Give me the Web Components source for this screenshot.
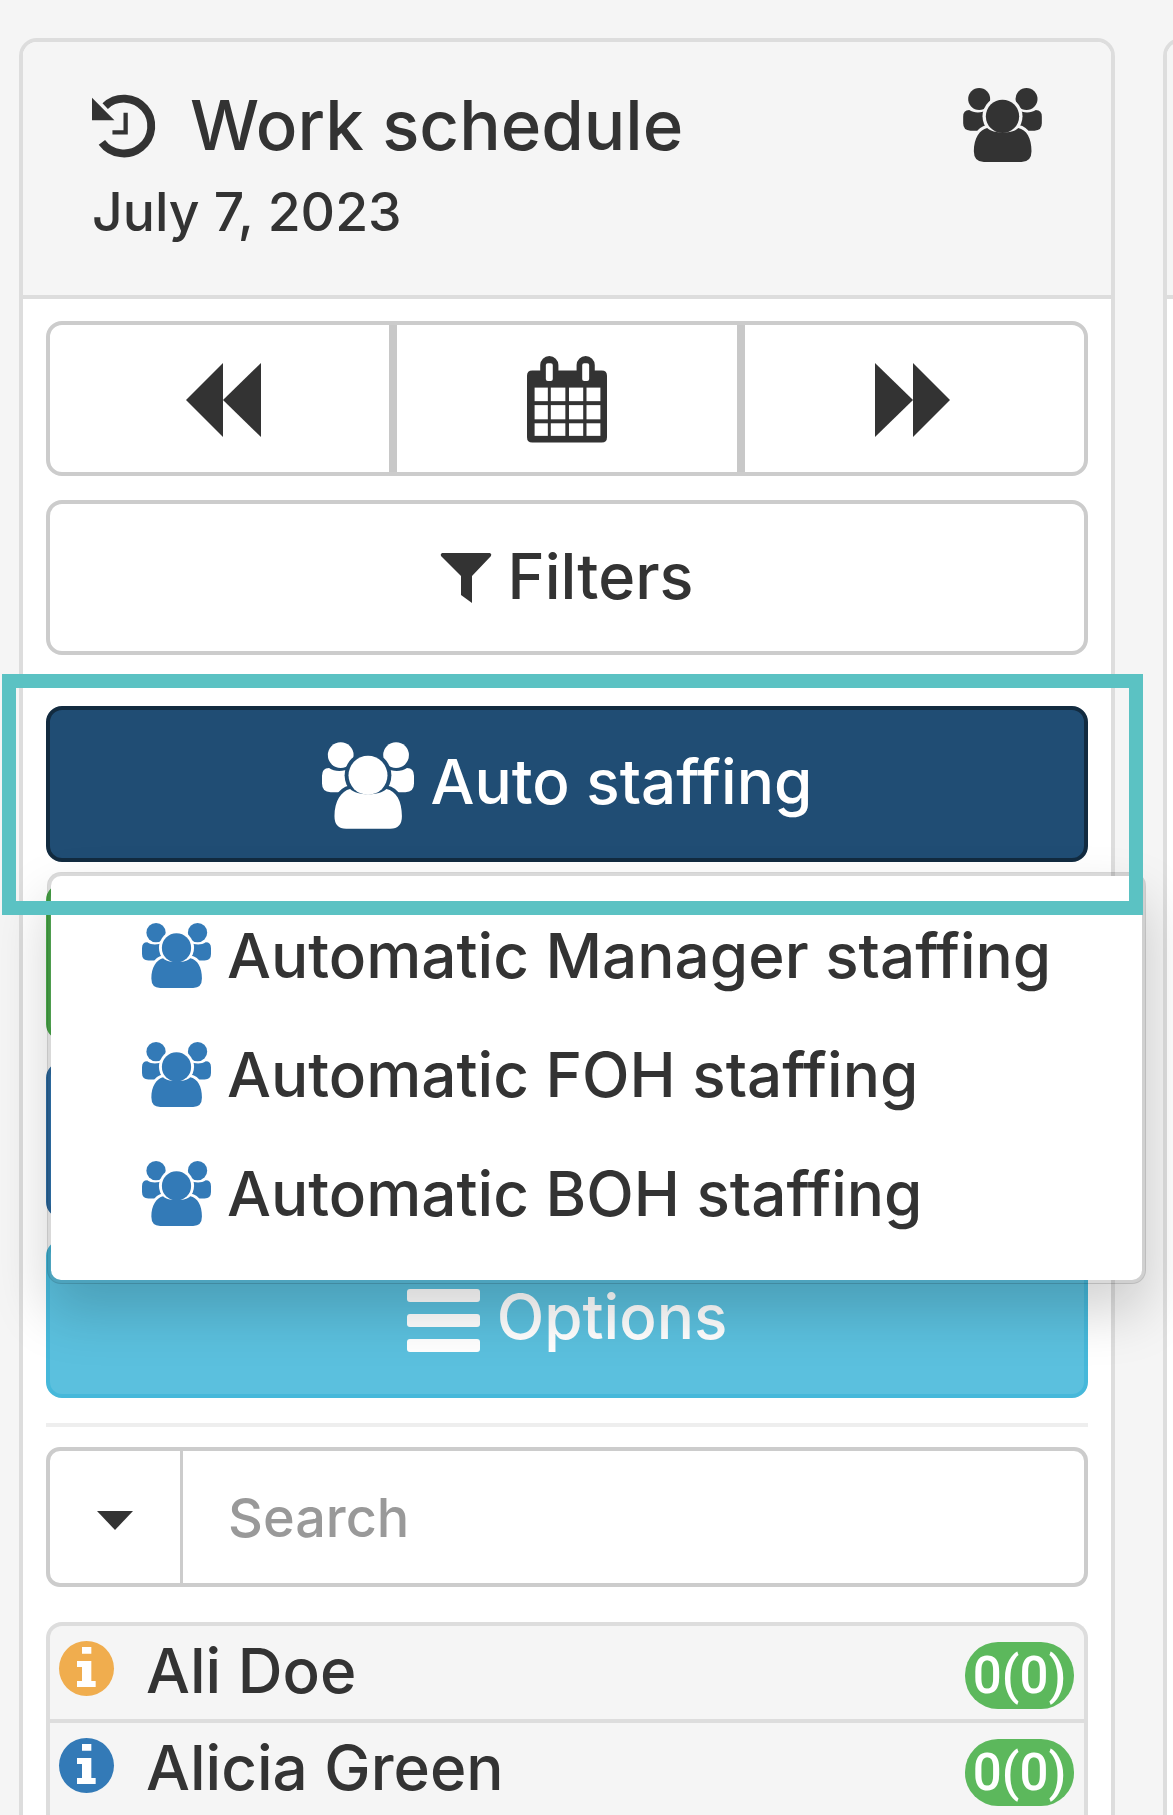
<!DOCTYPE html>
<html lang="en">
<head>
<meta charset="utf-8">
<title>Work schedule</title>
<style>
  html, body { margin: 0; height: 100%; }
  body {
    background: #f5f5f5;
    color: #333;
    font-family: Inter, Roboto, "Liberation Sans", sans-serif;
    font-weight: 450;
    font-variant-ligatures: common-ligatures;
    overflow: hidden;
  }
  .page { display: flex; gap: 48px; padding: 38px 0 0 19px; }
</style>
</head>
<body>
<div class="page">
  <work-panel>
    <panel-heading title="Work schedule" date="July 7, 2023"></panel-heading>
    <day-nav></day-nav>
    <action-btn kind="plain"><app-icon slot="icon" name="filter" w="50" h="51"></app-icon>Filters</action-btn>
    <staffing-menu>
      <menu-item>Automatic Manager staffing</menu-item>
      <menu-item>Automatic FOH staffing</menu-item>
      <menu-item>Automatic BOH staffing</menu-item>
    </staffing-menu>
    <action-btn kind="success"></action-btn>
    <action-btn kind="primary"></action-btn>
    <action-btn kind="info"><app-icon slot="icon" name="bars" w="73" h="63"></app-icon>Options</action-btn>
    <search-box></search-box>
    <staff-list>
      <staff-row level="warning" count="0(0)">Ali Doe</staff-row>
      <staff-row level="primary" count="0(0)">Alicia Green</staff-row>
    </staff-list>
  </work-panel>
  <work-panel>
    <panel-heading></panel-heading>
  </work-panel>
</div>

<script>
const ICONS = {
  users: `<svg viewBox="0 0 236 222" fill="currentColor">
    <mask id="m" maskUnits="userSpaceOnUse" x="-5" y="-5" width="246" height="232">
      <rect x="-5" y="-5" width="246" height="232" fill="#fff"/>
      <circle cx="118" cy="85" r="60" fill="#000"/>
      <path d="M32 190C32 150 50 125 72 120C90 138 148 138 165 120C190 125 205 150 205 190Q205 222 175 222H62Q32 222 32 190Z" fill="#000" stroke="#000" stroke-width="18"/>
    </mask>
    <g mask="url(#m)">
      <circle cx="48" cy="33" r="33"/>
      <circle cx="190" cy="33" r="33"/>
      <path d="M0 106V86Q0 66 18 66C32 76 56 76 72 66V128H22Q0 128 0 106Z"/>
      <path d="M236 106V86Q236 66 218 66C204 76 180 76 164 66V128H214Q236 128 236 106Z"/>
    </g>
    <circle cx="118" cy="85" r="50"/>
    <path d="M32 190C32 150 50 125 72 120C90 138 148 138 165 120C190 125 205 150 205 190Q205 222 175 222H62Q32 222 32 190Z"/>
  </svg>`,
  history: `<svg viewBox="0 0 188 188" fill="none" stroke="currentColor">
    <path d="M40 35A83 83 0 1 1 30 145" stroke-width="24"/>
    <path d="M102 55V115H62" stroke-width="13"/>
    <path d="M0 10V78H68Z" fill="currentColor" stroke="none"/>
  </svg>`,
  backward: `<svg viewBox="0 0 75 74" fill="currentColor"><path d="M37 0V74L0 37Z"/><path d="M75 0V74L37 37Z"/></svg>`,
  forward: `<svg viewBox="0 0 75 74" fill="currentColor"><path d="M0 0V74L38 37Z"/><path d="M38 0V74L75 37Z"/></svg>`,
  calendar: `<svg viewBox="0 0 242 260">
    <path fill="currentColor" fill-rule="evenodd" d="M40 42V26A27 27 0 0 1 95 26V42H150V26A27 27 0 0 1 205 26V42H226Q242 42 242 58V244Q242 260 226 260H16Q0 260 0 244V58Q0 42 16 42Z"/>
    <g fill="#fff">
      <rect x="57" y="20" width="21" height="54" rx="6"/><rect x="167" y="20" width="21" height="54" rx="6"/>
      <rect x="23" y="94" width="40" height="41"/><rect x="72" y="94" width="44" height="41"/><rect x="127" y="94" width="43" height="41"/><rect x="180" y="94" width="42" height="41"/>
      <rect x="23" y="147" width="40" height="43"/><rect x="72" y="147" width="44" height="43"/><rect x="127" y="147" width="43" height="43"/><rect x="180" y="147" width="42" height="43"/>
      <rect x="23" y="202" width="40" height="38"/><rect x="72" y="202" width="44" height="38"/><rect x="127" y="202" width="43" height="38"/><rect x="180" y="202" width="42" height="38"/>
    </g>
  </svg>`,
  filter: `<svg viewBox="0 0 50 51" fill="currentColor"><path d="M1 0H49Q51 1 50 3L31 23V50L20 42V23L0 3Q-1 1 1 0Z"/></svg>`,
  bars: `<svg viewBox="0 0 73 63" fill="currentColor"><rect width="73" height="13" rx="3"/><rect y="25" width="73" height="13" rx="3"/><rect y="50" width="73" height="13" rx="3"/></svg>`,
  info: `<svg viewBox="0 0 165 165"><circle cx="82.5" cy="82.5" r="82.5" fill="currentColor"/>
    <path fill="#fff" d="M69 18H97V38H69ZM54 60H97V120H110V138H54V120H69V78H54Z"/></svg>`,
  caret: `<svg viewBox="0 0 36 19" fill="currentColor"><path d="M0 0H36L18 19Z"/></svg>`
};

class AppIcon extends HTMLElement {
  constructor() {
    super();
    this.attachShadow({ mode: "open" });
  }
  connectedCallback() {
    const w = this.getAttribute("w");
    const h = this.getAttribute("h");
    this.shadowRoot.innerHTML = `<style>
      :host { display: inline-block; flex: none; width: ${w}px; height: ${h}px; }
      svg { display: block; width: 100%; height: 100%; overflow: visible; }
    </style>${ICONS[this.getAttribute("name")]}`;
  }
}
customElements.define("app-icon", AppIcon);

const panelTpl = document.createElement("template");
panelTpl.innerHTML = `
<style>
  :host {
    display: block;
    flex: none;
    box-sizing: border-box;
    width: 1096px;
    height: 1900px;
    background: #fff;
    border: 4px solid #ddd;
    border-radius: 18px;
  }
  .body { padding: 0 23px; }
  ::slotted(panel-heading) { margin: 0 -23px 22px; }
</style>
<div class="body"><slot></slot></div>`;
class WorkPanel extends HTMLElement {
  constructor() {
    super();
    this.attachShadow({ mode: "open" }).append(panelTpl.content.cloneNode(true));
  }
}
customElements.define("work-panel", WorkPanel);

const headingTpl = document.createElement("template");
headingTpl.innerHTML = `
<style>
  :host {
    display: block;
    box-sizing: border-box;
    height: 257px;
    padding: 39px 69px 0;
    background: #f5f5f5;
    border-bottom: 4px solid #ddd;
    border-radius: 14px 14px 0 0;
  }
  .top { display: flex; align-items: center; justify-content: space-between; height: 88px; }
  .title { display: flex; align-items: center; gap: 36px; font-size: 69px; line-height: 88px; }
  .date { margin-top: 3px; font-size: 53.5px; line-height: 80px; }
</style>
<div class="top">
  <div class="title"><app-icon name="history" w="62" h="63"></app-icon><span id="t"></span></div>
  <app-icon class="users" name="users" w="79" h="74"></app-icon>
</div>
<div class="date" id="d"></div>`;
class PanelHeading extends HTMLElement {
  constructor() {
    super();
    this.attachShadow({ mode: "open" }).append(headingTpl.content.cloneNode(true));
  }
  connectedCallback() {
    const title = this.getAttribute("title");
    if (!title) {
      this.shadowRoot.querySelector(".top").style.visibility = "hidden";
      return;
    }
    this.removeAttribute("title");
    this.shadowRoot.getElementById("t").textContent = title;
    this.shadowRoot.getElementById("d").textContent = this.getAttribute("date");
  }
}
customElements.define("panel-heading", PanelHeading);

const navTpl = document.createElement("template");
navTpl.innerHTML = `
<style>
  :host {
    display: flex;
    box-sizing: border-box;
    height: 155px;
    margin-bottom: 24px;
    background: #fff;
    border: 4px solid #ccc;
    border-radius: 16px;
    color: #333;
  }
  div { flex: 1; display: flex; align-items: center; justify-content: center; }
  div + div { border-left: 8px solid #c8c8c8; }
  app-icon { margin-top: 2px; }
  div:first-of-type app-icon { margin-left: 8px; }
  div:last-of-type app-icon { margin-right: 4px; }
</style>
<div><app-icon name="backward" w="75" h="74"></app-icon></div>
<div><app-icon name="calendar" w="80" h="87"></app-icon></div>
<div><app-icon name="forward" w="75" h="74"></app-icon></div>`;
class DayNav extends HTMLElement {
  constructor() {
    super();
    this.attachShadow({ mode: "open" }).append(navTpl.content.cloneNode(true));
  }
}
customElements.define("day-nav", DayNav);

const btnTpl = document.createElement("template");
btnTpl.innerHTML = `
<style>
  :host {
    display: flex;
    align-items: center;
    justify-content: center;
    gap: 17px;
    box-sizing: border-box;
    height: 156px;
    margin-bottom: 22px;
    padding-bottom: 4px;
    border: 4px solid #ccc;
    border-radius: 16px;
    background: #fff;
    color: #333;
    font-size: 62px;
    line-height: 88px;
  }
  ::slotted([slot="icon"]) { margin-top: 6px; }
  :host([kind="plain"]) { height: 155px; margin-bottom: 0; font-size: 63px; }
  :host([kind="dark"]) { background: #204d74; border-color: #122b40; color: #fff; margin-bottom: 0; }
  :host([kind="success"]) { background: #5cb85c; border-color: #4cae4c; }
  :host([kind="primary"]) { background: #337ab7; border-color: #2e6da4; }
  :host([kind="info"]) { height: 158px; background: #5bc0de; border-color: #46b8da; color: #fff; margin-bottom: 49px; }
</style>
<slot name="icon"></slot><slot></slot>`;
class ActionBtn extends HTMLElement {
  constructor() {
    super();
    this.attachShadow({ mode: "open" }).append(btnTpl.content.cloneNode(true));
  }
}
customElements.define("action-btn", ActionBtn);

const menuTpl = document.createElement("template");
menuTpl.innerHTML = `
<style>
  :host { display: block; position: relative; margin: 51px 0 22px; }
  .menu {
    position: absolute;
    z-index: 5;
    top: 166px;
    left: 1px;
    box-sizing: border-box;
    width: 1099px;
    height: 412px;
    padding: 20px 0 0;
    background: #fff;
    border: 4px solid rgba(0,0,0,.15);
    background-clip: padding-box;
    border-radius: 14px;
    box-shadow: 0 28px 55px rgba(0,0,0,.175);
  }
  .mark {
    position: absolute;
    z-index: 6;
    top: -32px;
    left: -44px;
    box-sizing: border-box;
    width: 1141px;
    height: 241px;
    border: 14px solid #5bc2c3;
    pointer-events: none;
  }
</style>
<action-btn kind="dark"><app-icon slot="icon" name="users" w="92" h="87"></app-icon>Auto staffing</action-btn>
<div class="menu"><slot></slot></div>
<div class="mark"></div>`;
class StaffingMenu extends HTMLElement {
  constructor() {
    super();
    this.attachShadow({ mode: "open" }).append(menuTpl.content.cloneNode(true));
  }
}
customElements.define("staffing-menu", StaffingMenu);

const itemTpl = document.createElement("template");
itemTpl.innerHTML = `
<style>
  :host {
    display: flex;
    align-items: center;
    gap: 16px;
    height: 119px;
    padding-left: 91px;
    color: #333;
    font-size: 62px;
    white-space: nowrap;
  }
  app-icon { color: #337ab7; }
</style>
<app-icon name="users" w="69" h="65"></app-icon><slot></slot>`;
class MenuItem extends HTMLElement {
  constructor() {
    super();
    this.attachShadow({ mode: "open" }).append(itemTpl.content.cloneNode(true));
  }
}
customElements.define("menu-item", MenuItem);

const searchTpl = document.createElement("template");
searchTpl.innerHTML = `
<style>
  :host {
    display: flex;
    box-sizing: border-box;
    height: 140px;
    margin-bottom: 35px;
    background: #fff;
    border: 4px solid #ccc;
    border-radius: 14px;
    position: relative;
  }
  :host::before {
    content: "";
    position: absolute;
    left: -4px;
    right: -4px;
    top: -28px;
    height: 4px;
    background: #eee;
  }
  .drop {
    flex: none;
    display: flex;
    align-items: center;
    justify-content: center;
    box-sizing: border-box;
    width: 133px;
    border-right: 3px solid #ccc;
    color: #333;
  }
  .drop app-icon { margin-top: 6px; }
  .input {
    flex: 1;
    display: flex;
    align-items: center;
    padding-left: 45px;
    color: #999;
    font-size: 54px;
  }
</style>
<div class="drop"><app-icon name="caret" w="36" h="19"></app-icon></div>
<div class="input">Search</div>`;
class SearchBox extends HTMLElement {
  constructor() {
    super();
    this.attachShadow({ mode: "open" }).append(searchTpl.content.cloneNode(true));
  }
}
customElements.define("search-box", SearchBox);

const listTpl = document.createElement("template");
listTpl.innerHTML = `
<style>
  :host {
    display: block;
    border: 4px solid #ddd;
    border-bottom: 0;
    border-radius: 16px 16px 0 0;
    background: #f5f5f5;
  }
</style>
<slot></slot>`;
class StaffList extends HTMLElement {
  constructor() {
    super();
    this.attachShadow({ mode: "open" }).append(listTpl.content.cloneNode(true));
  }
}
customElements.define("staff-list", StaffList);

const rowTpl = document.createElement("template");
rowTpl.innerHTML = `
<style>
  :host {
    display: flex;
    align-items: flex-start;
    box-sizing: border-box;
    height: 97px;
    padding: 15px 10px 0 9px;
    border-bottom: 4px solid #ddd;
    color: #333;
  }
  .name { flex: 1; margin: -1px 0 0 32px; font-size: 62px; line-height: 62px; }
  .badge {
    width: 109px;
    height: 67px;
    margin-top: 1px;
    border-radius: 33px;
    background: #5cb85c;
    color: #fff;
    font-family: Roboto, sans-serif;
    font-size: 51px;
    font-weight: 500;
    line-height: 67px;
    text-align: center;
  }
  app-icon { color: var(--tone); }
  :host([level="warning"]) { --tone: #f0ad4e; }
  :host([level="primary"]) { --tone: #337ab7; }
</style>
<app-icon name="info" w="55" h="55"></app-icon>
<div class="name"><slot></slot></div>
<div class="badge" id="c"></div>`;
class StaffRow extends HTMLElement {
  constructor() {
    super();
    this.attachShadow({ mode: "open" }).append(rowTpl.content.cloneNode(true));
  }
  connectedCallback() {
    this.shadowRoot.getElementById("c").textContent = this.getAttribute("count");
  }
}
customElements.define("staff-row", StaffRow);
</script>
</body>
</html>
